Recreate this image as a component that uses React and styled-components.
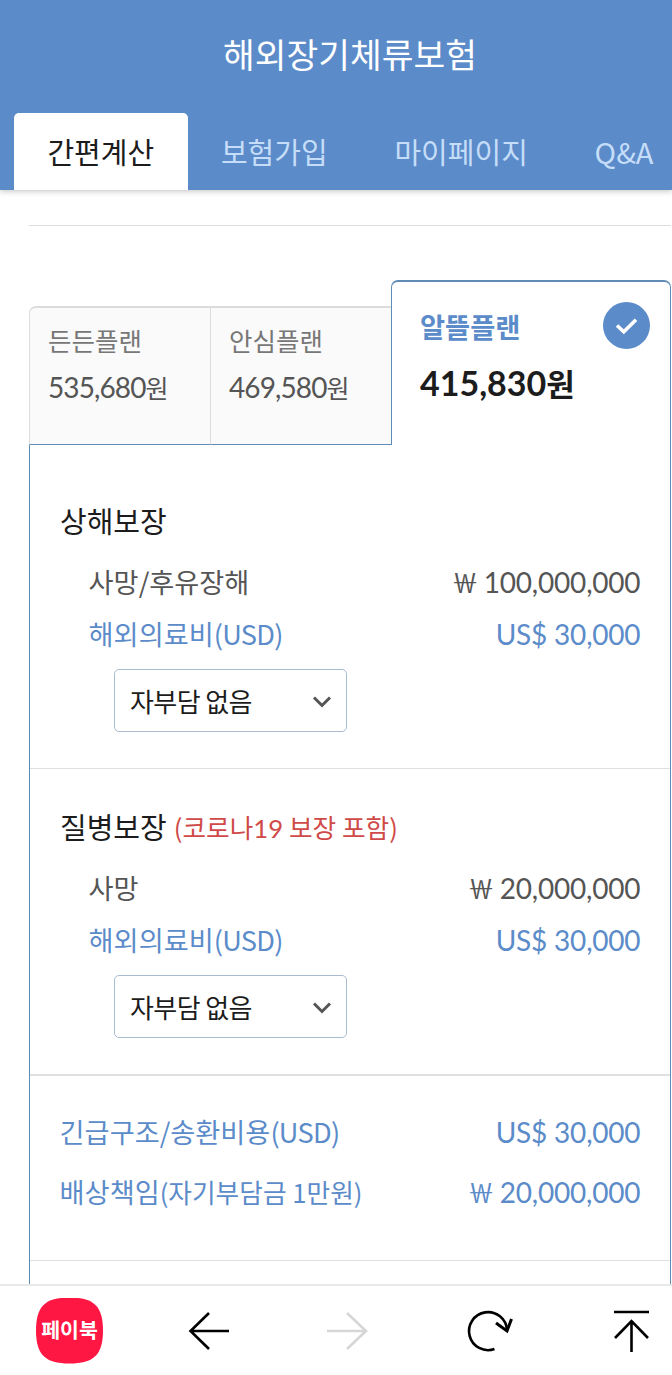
import styled, { createGlobalStyle } from "styled-components"

const App = () => {
    return (
        <>
        <GlobalStyle/>
        <Screen>
            <Header>
                <Title>해외장기체류보험</Title>
                <Tabs>
                    {tabs.map((tab,i)=>(
                        <Tab key={tab} $active={i===0}>{tab}</Tab>
                    ))}
                </Tabs>
            </Header>

            <Content>
                <TopLine/>
                <Plans>
                    {plans.map((plan,i)=>(
                        <PlanCard key={plan.name} $first={i===0}>
                            <PlanName>{plan.name}</PlanName>
                            <PlanPrice>{plan.price}<Won>원</Won></PlanPrice>
                        </PlanCard>
                    ))}
                    <ActivePlan>
                        <div>
                            <ActiveName>알뜰플랜</ActiveName>
                            <ActivePrice>415,830<ActiveWon>원</ActiveWon></ActivePrice>
                        </div>
                        <CheckCircle>
                            <svg width="47" height="47" viewBox="0 0 47 47" fill="none" stroke="#fff" strokeWidth="3.6">
                                <path d="M14 23.500L20.800 29.800L33 17.800"/>
                            </svg>
                        </CheckCircle>
                    </ActivePlan>
                </Plans>

                <Panel>
                    <Section $top={45} $bottom={36} $line={1}>
                        <SectionTitle>상해보장</SectionTitle>
                        <Coverage label="사망/후유장해" sign="￦" amount="100,000,000"/>
                        <Coverage label="해외의료비" code="(USD)" sign="US$" amount="30,000" blue/>
                        <Deductible/>
                    </Section>
                    <Section $top={27} $bottom={36} $line={2}>
                        <SectionTitle>질병보장<Notice>(코로나<Digits>19</Digits> 보장 포함)</Notice></SectionTitle>
                        <Coverage label="사망" sign="￦" amount="20,000,000"/>
                        <Coverage label="해외의료비" code="(USD)" sign="US$" amount="30,000" blue/>
                        <Deductible/>
                    </Section>
                    <Section $top={26} $bottom={38} $line={1}>
                        <Coverage label="긴급구조/송환비용" code="(USD)" sign="US$" amount="30,000" blue wide/>
                        <Coverage label="배상책임" note="(자기부담금 1만원)" sign="￦" amount="20,000,000" blue wide/>
                    </Section>
                </Panel>
            </Content>

            <BottomBar>
                <AppBadge>페이북</AppBadge>
                <BarIcons viewBox="0 0 572 90">
                    <g stroke="#000" strokeWidth="2.6">
                        <path d="M129 45H90M109 27L90.500 45L109 63"/>
                        <path stroke="#d6d6d6" d="M227 45H266M247 27L266 45L247 63"/>
                        <path d="M394.500 63A19 19 0 1 1 407 44"/>
                        <path strokeWidth="3" d="M396 37L407 45L411.500 33"/>
                        <path d="M514 26H549M531.500 66V35M515 52L531.500 35L548 52"/>
                    </g>
                </BarIcons>
            </BottomBar>
        </Screen>
        </>
    )
}

const Coverage = ({label,code,note,sign,amount,blue,wide}) =>{
    return (
        <Row $blue={blue} $wide={wide}>
            <Label>{label}{code && <Code>{code}</Code>}{note && <RowNote>{note}</RowNote>}</Label>
            <Amount>{sign==="￦" ? <WonSign>￦</WonSign> : sign} {amount}</Amount>
        </Row>
    )
}

const Deductible = () =>{
    return (
        <SelectBox>
            <span>자부담 없음</span>
            <svg width="20" height="14" viewBox="0 0 20 14" fill="none" stroke="#555" strokeWidth="3">
                <path d="M2 3.500L10 11.500L18 3.500"/>
            </svg>
        </SelectBox>
    )
}

const tabs = ["간편계산","보험가입","마이페이지","Q&A"]

const plans = [
    {name:"든든플랜",price:"535,680"},
    {name:"안심플랜",price:"469,580"},
]

//styling starts----------------------------------------
const Blue = "#5b8bc9"
const LineBlue = "#5f8cb4"
const Korean = `"Noto Sans CJK KR", sans-serif`
const Numbers = `Lato, "Noto Sans CJK KR", sans-serif`

const GlobalStyle = createGlobalStyle`
*{
    box-sizing: border-box;
}
body{
    margin: 0;
    background: #fff;
    font-family: ${Korean};
}
`

const Screen = styled.div`
width: 672px;
height: 1375px;
overflow: hidden;
display: flex;
flex-direction: column;
background: #fff;
`

const Header = styled.header`
flex: none;
height: 190px;
background: ${Blue};
box-shadow: 0 1px 6px rgba(0,0,0,0.25);
`

const Title = styled.h1`
margin: 0;
height: 113px;
padding-left: 28px;
line-height: 106px;
text-align: center;
font-size: 34.5px;
font-weight: 400;
color: #fff;
`

const Tabs = styled.nav`
display: flex;
padding-left: 14px;
`

const Tab = styled.div`
flex: none;
height: 77px;
padding: 0 33.400px;
line-height: 76px;
border-radius: 5px 5px 0 0;
font-size: 29px;
background: ${p => p.$active ? "#fff" : "transparent"};
color: ${p => p.$active ? "#1c1c1c" : "#c5ddf8"};
`

const Content = styled.main`
flex: 1;
min-height: 0;
overflow: hidden;
padding: 35px 1px 0 29px;
`

const TopLine = styled.div`
height: 1px;
background: #dcdcdc;
`

const Plans = styled.div`
display: flex;
align-items: flex-end;
margin-top: 54px;
`

const PlanCard = styled.div`
width: 181px;
height: 139px;
padding: 8px 0 0 18px;
background: #fafafa;
border-top: 2px solid #dcdcdc;
border-left: 1px solid #dcdcdc;
border-bottom: 1px solid ${LineBlue};
border-top-left-radius: ${p => p.$first ? "7px" : "0"};
`

const PlanName = styled.div`
height: 46px;
line-height: 47px;
font-size: 25.5px;
color: #777;
`

const PlanPrice = styled.div`
height: 46px;
line-height: 50px;
font-family: ${Numbers};
font-size: 28px;
letter-spacing: -0.900px;
color: #555;
`

const Won = styled.span`
font-size: 25px;
`

const ActivePlan = styled.div`
flex: 1;
height: 165px;
padding: 16px 20px 0 28px;
display: flex;
justify-content: space-between;
border: 1px solid ${LineBlue};
border-top-width: 2px;
border-bottom: 0;
border-radius: 7px 7px 0 0;
`

const ActiveName = styled.div`
height: 57px;
line-height: 56px;
font-size: 27.300px;
font-weight: 700;
color: ${Blue};
`

const ActivePrice = styled.div`
height: 56px;
line-height: 56px;
font-family: ${Numbers};
font-size: 34px;
font-weight: 700;
color: #1c1c1c;
`

const ActiveWon = styled.span`
font-size: 31px;
`

const CheckCircle = styled.div`
width: 47px;
height: 47px;
margin-top: 4px;
border-radius: 50%;
background: ${Blue};
`

const Panel = styled.div`
height: 900px;
border-left: 1px solid ${LineBlue};
border-right: 1px solid ${LineBlue};
`

const Section = styled.section`
padding: ${p => p.$top}px 29px ${p => p.$bottom}px 30px;
border-bottom: ${p => p.$line}px solid #e0e0e0;
`

const SectionTitle = styled.h2`
display: flex;
margin: 0 0 6px;
height: 60px;
line-height: 60px;
font-size: 29px;
font-weight: 400;
color: #1c1c1c;
`

const Notice = styled.span`
margin-left: 7px;
font-size: 25.700px;
line-height: 62px;
color: #cf4a48;
`

const Digits = styled.span`
font-family: ${Numbers};
`

const Row = styled.div`
display: flex;
justify-content: space-between;
height: ${p => p.$wide ? "60px" : "52px"};
line-height: ${p => p.$wide ? "59px" : "51px"};
padding-left: ${p => p.$wide ? "0" : "29px"};
font-size: 27.200px;
color: ${p => p.$blue ? Blue : "#555"};
`

const Label = styled.span`
margin-left: -0.400px;
`

const Code = styled.span`
letter-spacing: -0.700px;
`

const RowNote = styled.span`
font-size: 25.700px;
`

const Amount = styled.span`
padding: 1px 0.600px 0 0;
font-family: ${Numbers};
font-size: 28px;
letter-spacing: -0.200px;
`

const WonSign = styled.span`
margin-right: -1.500px;
font-family: ${Korean};
font-size: 27px;
line-height: 1;
`

const SelectBox = styled.div`
width: 233px;
height: 63px;
margin: 9px 0 0 54px;
padding: 0 14px 0 15px;
display: flex;
align-items: center;
justify-content: space-between;
border: 1px solid #a9bccf;
border-radius: 5px;
font-size: 26px;
letter-spacing: -0.600px;
color: #1c1c1c;
`

const BottomBar = styled.footer`
flex: none;
height: 91px;
display: flex;
align-items: center;
padding-left: 36px;
border-top: 2px solid #e8e8e8;
`

const AppBadge = styled.div`
width: 67px;
height: 66px;
clip-path: path("M33.5 0C58 0 67 9 67 33S58 66 33.5 66S0 57 0 33S9 0 33.5 0Z");
background: #ff1744;
color: #fff;
font-size: 20.500px;
font-weight: 700;
line-height: 63px;
text-align: center;
`

const BarIcons = styled.svg`
width: 572px;
height: 90px;
margin-left: -3px;
fill: none;
`

export default App
